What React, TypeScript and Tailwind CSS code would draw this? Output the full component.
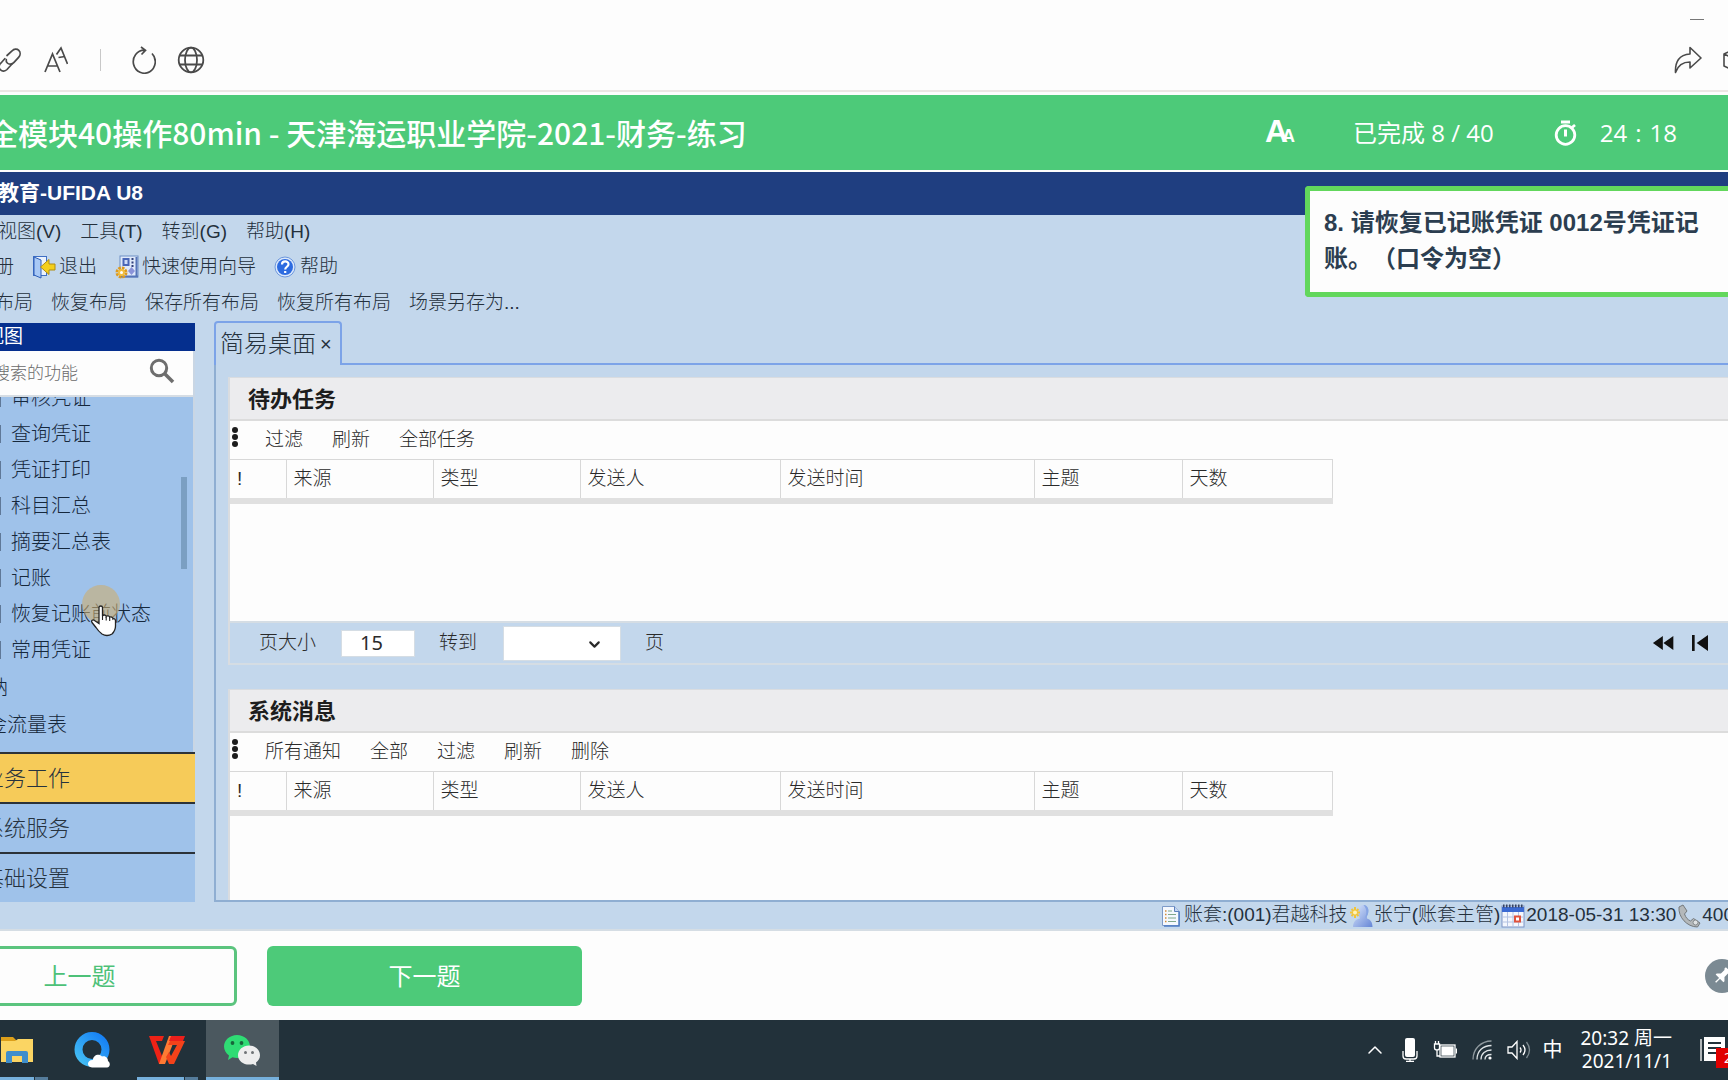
import { ReactNode } from 'react';
import { MdFastRewind, MdSkipPrevious } from 'react-icons/md';
import { ChevronDown, ChevronUp } from 'lucide-react';

const treeItems = ['审核凭证', '查询凭证', '凭证打印', '科目汇总', '摘要汇总表', '记账', '恢复记账前状态', '常用凭证'];

const menuItems = ['视图(V)', '工具(T)', '转到(G)', '帮助(H)'];

const layoutItems = ['布局', '恢复布局', '保存所有布局', '恢复所有布局', '场景另存为...'];

const navItems = [
  { label: '业务工作', active: true },
  { label: '系统服务', active: false },
  { label: '基础设置', active: false }
];

const columns = [
  { label: '!', width: 'w-[56px]' },
  { label: '来源', width: 'w-[147px]' },
  { label: '类型', width: 'w-[147px]' },
  { label: '发送人', width: 'w-[200px]' },
  { label: '发送时间', width: 'w-[254px]' },
  { label: '主题', width: 'w-[148px]' },
  { label: '天数', width: 'w-[150px]' }
];

function LinkIcon() {
  return (
    <svg className="w-7 h-7" viewBox="0 0 28 28" fill="none" stroke="#4a4a4a" strokeWidth="1.7" strokeLinecap="round">
      <path d="M11 9.500l5-4.500c2-2.200 5-2.400 6.800-.6s1.800 4.800-.2 7l-4.600 5c-2 2.200-5 2.400-6.700.6-1-1-1.300-2.200-1-3.500" />
      <path d="M16 18l-5 5.500c-2 2-4.800 2.200-6.500.4s-1.700-4.700.3-6.700l4-4.500" />
    </svg>
  );
}

function TextSizeIcon() {
  return (
    <svg className="w-6 h-7" viewBox="0 0 24 28" fill="none" stroke="#4a4a4a" strokeWidth="1.7">
      <path d="M1 26L8.500 8l7.500 18M3.500 20h10.500" />
      <path d="M12.500 8.500L17 2l6.500 16M14.500 11.500l6.500-1" />
    </svg>
  );
}

function RefreshIcon() {
  return (
    <svg className="w-6 h-7" viewBox="0 0 24 28" fill="none" stroke="#4a4a4a" strokeWidth="1.700">
      <path d="M20 7.500A11 11.500 0 1 1 12.500 4.200M9 1l4.500 3.400L9.500 8.500" />
    </svg>
  );
}

function GlobeIcon() {
  return (
    <svg className="w-7 h-7" viewBox="0 0 28 28" fill="none" stroke="#4a4a4a" strokeWidth="1.800">
      <circle cx="14" cy="14" r="12.300" />
      <ellipse cx="14" cy="14" rx="6" ry="12.300" />
      <path d="M3 9.500h22M3 18.500h22" />
    </svg>
  );
}

function ShareIcon() {
  return (
    <svg className="w-7 h-7" viewBox="0 0 28 28" fill="none" stroke="#4a4a4a" strokeWidth="1.600" strokeLinejoin="round">
      <path d="M16 1.500L27 12 16 22v-6C9 16 4 19 1.500 26.500 1 16 5 8.500 16 8z" />
    </svg>
  );
}

function CubeIcon() {
  return (
    <svg className="w-[22px] h-[22px] shrink-0" viewBox="0 0 22 22" fill="none" stroke="#4a4a4a" strokeWidth="1.600" strokeLinejoin="round">
      <path d="M11 1l9 4v12l-9 4-9-4V5zM2 5l9 4 9-4M11 9v12" />
    </svg>
  );
}

function TimerIcon() {
  return (
    <svg className="w-7 h-7 mr-5" viewBox="0 0 28 28" fill="none" stroke="#fff">
      <circle cx="13.500" cy="16" r="9.300" strokeWidth="2.800" />
      <path d="M9 3h9" strokeWidth="3" />
      <path d="M13.500 10.500v7" strokeWidth="3" />
      <path d="M20 8.500l3-2.500" strokeWidth="2.800" />
    </svg>
  );
}

function SearchIcon() {
  return (
    <svg className="w-[26px] h-[26px]" viewBox="0 0 26 26" fill="none" stroke="#6e6e6e">
      <circle cx="10" cy="10" r="7.700" strokeWidth="3" />
      <path d="M15.500 15.500l8.500 8.500" strokeWidth="3.600" />
    </svg>
  );
}

function ExitIcon() {
  return (
    <svg className="w-6 h-6" viewBox="0 0 24 24">
      <rect x="1.500" y="1.500" width="13" height="19" fill="#eaf2fd" stroke="#3f6fc4" />
      <path d="M2 2l7 3v18l-7-3z" fill="#a9c9f5" stroke="#2f5fb8" />
      <path d="M23 9v6h-6v4.500L8.500 12 17 4.500V9z" fill="#f4cf1c" stroke="#b08d13" />
    </svg>
  );
}

function WizardIcon() {
  return (
    <svg className="w-6 h-6" viewBox="0 0 24 24">
      <rect x="5" y="1" width="18" height="21" fill="#dfe9fa" stroke="#6f8fc4" />
      <path d="M21.500 2v20M6 21.500h17" stroke="#5675b8" strokeWidth="2" />
      <rect x="7.500" y="3" width="7" height="8" fill="#4a66b8" />
      <rect x="9.500" y="5" width="3" height="4" fill="#cfdcf8" />
      <path d="M17.500 3v9" stroke="#2f3f7a" strokeWidth="2" strokeDasharray="2 1.500" />
      <path d="M16.500 12l3.500 4-3.500 4-3.500-4z" fill="#8b93d8" />
      <circle cx="6.500" cy="17.500" r="4.500" fill="none" stroke="#dd9a1e" strokeWidth="3" strokeDasharray="2.500 1" />
      <circle cx="6.500" cy="17.500" r="3.500" fill="#f3bf3e" />
      <circle cx="6.500" cy="17.500" r="1.500" fill="#fff" />
    </svg>
  );
}

function HelpIcon() {
  return (
    <svg className="w-[22px] h-[22px]" viewBox="0 0 22 22">
      <circle cx="11" cy="11" r="10" fill="#dbe8fb" stroke="#6d97dd" />
      <circle cx="11" cy="11" r="8" fill="#2d6be0" />
      <path d="M8 8.500c0-4 6.500-4 6.500-.3 0 2.500-3.300 2.600-3.300 5.300M11.200 15v2" fill="none" stroke="#fff" strokeWidth="2.200" />
    </svg>
  );
}

function DocIcon() {
  return (
    <svg className="w-[22px] h-[22px] shrink-0" viewBox="0 0 22 22">
      <path d="M1.500 1.500h12l5 5v14h-17z" fill="#f4f8fe" stroke="#7d9ac8" />
      <path d="M18 7v14H3" fill="none" stroke="#4f7cc4" strokeWidth="1.500" />
      <path d="M13.500 1.500v5h5" fill="#c4d6f2" stroke="#5c80bc" />
      <path d="M4 6h1.500M4 9.500h1.500M4 13h1.500M4 16.500h1.500" stroke="#d28b3a" strokeWidth="1.500" />
      <path d="M7 6h4M7 9.500h8M7 13h8M7 16.500h8" stroke="#7fa78c" strokeWidth="1.200" />
    </svg>
  );
}

function UserIcon() {
  return (
    <svg className="w-6 h-6 shrink-0" viewBox="0 0 24 24">
      <defs>
        <linearGradient id="person" x1="0" y1="0" x2="1" y2="1">
          <stop offset="0" stopColor="#dce8fc" />
          <stop offset="1" stopColor="#6585d6" />
        </linearGradient>
      </defs>
      <path d="M4 23c0-5 3-8 7-8.500L10 12C8 8 9 1 14.500 1S20.500 8 18 12v2.500c3.500 1 5.500 4 5.500 8.500z" fill="url(#person)" />
      <path d="M14.500 1C20 1 20.500 8 18 12l-2 2c2-5 2-9-1.500-13z" fill="#86a5e4" />
      <path d="M6 3v11M1 8.500h10M2.500 5l7 7M9.500 5l-7 7" stroke="#f2c53a" strokeWidth="2" />
      <circle cx="6" cy="8.500" r="2" fill="#fff3b8" />
    </svg>
  );
}

function CalendarIcon() {
  return (
    <svg className="w-6 h-6 shrink-0" viewBox="0 0 24 24">
      <rect x="1" y="2" width="22" height="21" fill="#f4f7fd" stroke="#7d94c4" />
      <path d="M1 3h22v5H1z" fill="#3b6ad2" />
      <path d="M2 2h21" stroke="#36435f" strokeWidth="3" strokeDasharray="1.500 1.500" />
      <path d="M6.500 8v15M12 8v15M17.500 8v15M1 13h22M1 18h22" stroke="#b4c3e2" />
      <rect x="14" y="12.500" width="5" height="5" fill="#fff" stroke="#e0523c" strokeWidth="2" />
    </svg>
  );
}

function PhoneIcon() {
  return (
    <svg className="w-6 h-6 shrink-0" viewBox="0 0 24 24">
      <path d="M2 3l4-2 4 6-2.500 3c1.500 4 3 5.500 6 7l3-2.500L23 19l-2.500 4C10 23 1 13 2 3z" fill="#b4b8ba" stroke="#74797c" />
      <circle cx="18.500" cy="18.500" r="2.500" fill="#dfe2e3" stroke="#84898c" />
    </svg>
  );
}

function HandCursor() {
  return (
    <svg className="w-7 h-8" viewBox="0 0 28 32">
      <path
        d="M9 2.500c0-2 3.500-2 3.500 0V11c.5-1.500 3.500-1.300 3.700.5.800-1.200 3.300-.8 3.500.9 1-1 3.300-.4 3.300 1.600 1.200-.8 2.500.2 2.500 2v5c0 4-1.500 6-3.500 8q-5 3-10 0c-2-1.500-4-3.500-6-6.500l-4-5c-1.300-2 1-3.300 2.500-2L9 18.500z"
        fill="#fff"
        stroke="#222"
        strokeWidth="1.300"
      />
      <path d="M12.500 11v4M16.200 12v3.500M19.700 13v3" stroke="#222" strokeWidth="1.100" />
    </svg>
  );
}

function PinIcon() {
  return (
    <svg className="w-5 h-5" viewBox="0 0 20 20">
      <g transform="rotate(45 10 10)" fill="#fff">
        <path d="M6.500 1h7v2l-1 1v5l3 3v1.500h-11V12l3-3V4l-1-1z" />
        <path d="M9.300 13h1.400v6H9.300z" />
      </g>
    </svg>
  );
}

function FolderLogo() {
  return (
    <svg className="w-8 h-7" viewBox="0 0 32 28">
      <path d="M0 1h12l3 3v4H0z" fill="#dc9f1a" />
      <path d="M0 5h14l3-2h15v23H0z" fill="#fbd563" />
      <path d="M5 27V17q0-2 2-2h18q2 0 2 2v10h-6v-7H11v7z" fill="#3f8ecb" />
    </svg>
  );
}

function BrowserLogo() {
  return (
    <svg className="w-9 h-9" viewBox="0 0 36 36">
      <defs>
        <linearGradient id="ring" x1="0" y1="1" x2="1" y2="0">
          <stop offset="0" stopColor="#45c0f4" />
          <stop offset="1" stopColor="#147df5" />
        </linearGradient>
      </defs>
      <ellipse cx="18" cy="17.500" rx="13.500" ry="13.500" fill="none" stroke="url(#ring)" strokeWidth="8" />
      <path d="M18 35.500c-6-.5-5-8 1-7.500 0-5 6-7 9-3.500 4-1 6 2 6 4.500 3 2 2 6.500-1 6.500z" fill="#fff" />
    </svg>
  );
}

function WpsLogo() {
  return (
    <svg className="w-9 h-7" viewBox="0 0 36 28">
      <path d="M0 0h15l-2 5H7l6 15 3 0-3 8h-3z" fill="#ee2216" />
      <path d="M20 0h7L16 28h-6z" fill="#ff7a33" />
      <path d="M21 5h15l-11 23h-5l-3-7 3-5 2 4 6-11h-9z" fill="#f4421a" />
      <path d="M22 0h14l-2 5H20z" fill="#ec1f1b" />
    </svg>
  );
}

function WechatLogo() {
  return (
    <svg className="w-9 h-8" viewBox="0 0 36 32">
      <path d="M13 1c7 0 13 5 13 11.500S20 24 13 24c-1.500 0-3-.2-4.500-.7L4 26l1-4.500C2 19.500 0 16 0 12.500 0 6 6 1 13 1z" fill="#2fdc74" />
      <circle cx="8.500" cy="9" r="1.900" fill="#17653a" />
      <circle cx="17.500" cy="9" r="1.900" fill="#17653a" />
      <path d="M25 11.500c6 0 11 4.300 11 9.700 0 3-1.500 5.500-4 7.300l.5 3.500-3.500-2c-1.300.4-2.600.6-4 .6-6 0-11-4-11-9.400s5-9.700 11-9.700z" fill="#ededed" />
      <circle cx="21.500" cy="18.500" r="1.500" fill="#6f7376" />
      <circle cx="28.500" cy="18.500" r="1.500" fill="#6f7376" />
    </svg>
  );
}

function MicIcon() {
  return (
    <svg className="w-4 h-6" viewBox="0 0 16 24">
      <rect x="3" y="0" width="10" height="19" rx="2" fill="#fff" />
      <path d="M1 13v5q0 3 3 3h8q3 0 3-3v-5M8 21v2.500M4 23.300h8" fill="none" stroke="#fff" strokeWidth="1.300" />
    </svg>
  );
}

function BatteryIcon() {
  return (
    <svg className="w-6 h-5" viewBox="0 0 24 20" fill="none" stroke="#fff" strokeWidth="1.300">
      <path d="M1.500 4h5v4q0 2-2.500 2T1.500 8zM2.500 4V1M5.500 4V1M4 10v6h3" />
      <rect x="7" y="5" width="15" height="12" />
      <rect x="9" y="7" width="11" height="8" fill="#fff" />
      <path d="M23.500 8.500v5" />
    </svg>
  );
}

function WifiIcon() {
  return (
    <svg className="w-5 h-5" viewBox="0 0 20 20" fill="none" stroke="#dfe4e6" strokeWidth="1.300">
      <path d="M1 19.500C1 9 9 1 19.500 1" stroke="#8f999e" />
      <path d="M5 19.500C5 11 11 5.500 19.500 5.500M9 19.500c0-6 4.500-9.500 10.500-9.500M13 19.500c0-3 2.500-5 6.500-5" />
      <circle cx="18" cy="18" r="1.600" fill="#fff" stroke="none" />
    </svg>
  );
}

function VolumeIcon() {
  return (
    <svg className="w-6 h-5" viewBox="0 0 24 20" fill="none" stroke="#fff" strokeWidth="1.300">
      <path d="M1 7h4l5-5.500v17L5 13H1zM13 7.500q2 2.500 0 5M16 5q4 5 0 10" />
      <path d="M19.500 2q6 8 0 16" stroke="#7d898f" />
    </svg>
  );
}

function NoteIcon() {
  return (
    <svg className="w-7 h-7" viewBox="0 0 28 28">
      <path d="M1 3v22" stroke="#fff" strokeWidth="1.300" />
      <path d="M4 1h21v19l-5 5H4z" fill="#fff" />
      <path d="M8 7h13M8 12h13M8 17h8" stroke="#22313a" strokeWidth="2" />
    </svg>
  );
}

function TitleBar() {
  return (
    <header className="h-[92px] shrink-0 flex flex-col border-b-2 border-[#ece6e4]">
      <div className="h-[38px] flex justify-end items-center pr-6">
        <button aria-label="最小化" className="w-[14px] h-3 flex items-center">
          <span className="w-full h-px bg-[#777777]" />
        </button>
      </div>
      <div className="h-11 flex items-center">
        <button aria-label="复制链接" className="-ml-1"><LinkIcon /></button>
        <button aria-label="字体大小" className="ml-5"><TextSizeIcon /></button>
        <span className="w-px h-[22px] ml-8 bg-[#c8c8c8]" />
        <button aria-label="刷新" className="ml-[31px]"><RefreshIcon /></button>
        <button aria-label="浏览器" className="ml-[21px]"><GlobeIcon /></button>
        <button aria-label="分享" className="ml-auto"><ShareIcon /></button>
        <button aria-label="收藏" className="ml-5 -mr-4"><CubeIcon /></button>
      </div>
    </header>
  );
}

function ExamHeader() {
  return (
    <div className="h-[75px] shrink-0 mt-[3px] mb-0.5 bg-[#4dca79] text-white flex items-center whitespace-nowrap font-['Open_Sans','Noto_Sans_CJK_SC',sans-serif]">
      <h1 className="-ml-3 text-[30px] font-medium font-['Noto_Sans_CJK_SC',sans-serif]">
        全模块40操作80min - 天津海运职业学院-2021-财务-练习
      </h1>
      <button aria-label="字号" className="ml-auto mr-[58px] flex items-baseline font-['Liberation_Sans',sans-serif] font-bold leading-none">
        <span className="text-[32px]">A</span>
        <span className="-ml-1.5 text-lg">A</span>
      </button>
      <span className="text-2xl mr-[58px]">已完成 8 / 40</span>
      <TimerIcon />
      <span className="text-2xl mr-[51px] flex gap-2">
        <span>24</span>
        <span>:</span>
        <span>18</span>
      </span>
    </div>
  );
}

function Toolbar() {
  return (
    <div className="text-[19px] leading-6 text-[#24303c] whitespace-nowrap">
      <div className="h-[33px] flex items-center gap-[19px] -ml-0.5">
        {menuItems.map((item) => (
          <button key={item}>{item}</button>
        ))}
      </div>
      <div className="h-[37px] flex items-center gap-[18px] -ml-[5px]">
        <button>册</button>
        <button className="flex items-center gap-[3px]"><ExitIcon />退出</button>
        <button className="flex items-center gap-[3px]"><WizardIcon />快速使用向导</button>
        <button className="flex items-center gap-1"><HelpIcon />帮助</button>
      </div>
      <div className="h-9 flex items-center gap-[18px] -ml-[5px]">
        {layoutItems.map((item) => (
          <button key={item}>{item}</button>
        ))}
      </div>
    </div>
  );
}

function Sidebar() {
  return (
    <aside className="w-[195px] shrink-0 mt-0.5 flex flex-col overflow-hidden whitespace-nowrap">
      <div className="h-7 shrink-0 flex items-center bg-[#052f8e] text-white text-[19px] font-normal">
        <span className="-ml-[15px]">视图</span>
      </div>
      <div className="flex-1 min-h-0 flex flex-col bg-[#9fc2ea] border-r-2 border-[#c9d6e4]">
        <div className="h-[46px] shrink-0 flex items-center bg-[#fdfdfd] border-b-2 border-[#d6dde4]">
          <input
            aria-label="搜索功能"
            placeholder="搜索的功能"
            className="-ml-[7px] w-[156px] min-w-0 pt-0.5 text-[17px] placeholder:text-[#6a6a6a] outline-none"
          />
          <button aria-label="搜索" className="pb-1"><SearchIcon /></button>
        </div>
        <div className="relative flex-1 min-h-0 overflow-hidden text-xl text-[#16283c]">
          <ul className="-mt-[17px]">
            {treeItems.map((item) => (
              <li key={item} className="h-9 flex items-center gap-2.5">
                <span className="w-px h-[18px] bg-[#5f7898]" />
                <a href="#" className="text-inherit">{item}</a>
              </li>
            ))}
            <li className="h-[39px] flex items-center -ml-8"><a href="#">出纳</a></li>
            <li className="h-9 flex items-center -ml-[33px]"><a href="#">现金流量表</a></li>
          </ul>
          <span className="absolute right-[6px] top-20 w-1.5 h-[92px] bg-[#7b9fc2]" />
          <span className="absolute left-[82px] top-[188px] w-[38px] h-[38px] rounded-full bg-[#cdae6f]/60" />
          <span className="absolute left-[90px] top-[208px]"><HandCursor /></span>
        </div>
        <nav className="shrink-0 -mr-0.5">
          {navItems.map((item) => (
            <button
              key={item.label}
              className={`w-full h-[50px] flex items-center border-t-2 border-[#2c3238] text-[22px] text-[#26323e] ${item.active ? 'bg-[#f6cb59]' : 'bg-[#9fc2ea]'}`}
            >
              <span className="-ml-[18px]">{item.label}</span>
            </button>
          ))}
        </nav>
      </div>
    </aside>
  );
}

function Panel({ title, actions, grow, children }: { title: string; actions: string[]; grow?: boolean; children?: ReactNode }) {
  return (
    <section className={`flex flex-col border-l-2 border-t border-[#d9dce0] ${grow ? 'flex-1 min-h-0' : ''}`}>
      <h2 className="h-[43px] shrink-0 flex items-center pl-[18px] pt-0.5 bg-[#ececee] border-b-2 border-[#dcdcdc] text-[22px] font-bold text-[#1d1d1d]">
        {title}
      </h2>
      <div className={`bg-[#fdfdfd] ${grow ? 'flex-1' : 'h-[200px]'}`}>
        <div className="h-[38px] flex items-center">
          <svg className="w-2 h-[22px] ml-px mb-1.5" viewBox="0 0 8 22" fill="#1c1c1c">
            <circle cx="4" cy="4" r="3" />
            <circle cx="4" cy="11" r="3" />
            <circle cx="4" cy="18" r="3" />
          </svg>
          <div className="ml-[26px] flex gap-[29px]">
            {actions.map((action) => (
              <button key={action}>{action}</button>
            ))}
          </div>
        </div>
        <table className="table-fixed w-[1102px] border-collapse">
          <thead>
            <tr className="h-[41px] border-t border-t-[#d8d8d8] border-b-[6px] border-b-[#e0e0e0]">
              {columns.map((column) => (
                <th key={column.label} scope="col" className={`${column.width} pl-[7px] text-left font-light border-r border-r-[#d8d8d8]`}>
                  {column.label}
                </th>
              ))}
            </tr>
          </thead>
        </table>
      </div>
      {children}
    </section>
  );
}

function Pager() {
  return (
    <div className="h-11 shrink-0 flex items-center border-y-2 border-[#d5dde4] pl-[29px] pr-3">
      <label htmlFor="page-size">页大小</label>
      <input
        id="page-size"
        defaultValue="15"
        className="ml-[25px] w-[74px] h-[27px] pl-[18px] bg-white border border-[#d5dde4] text-xl outline-none font-normal font-['Noto_Sans',sans-serif]"
      />
      <label htmlFor="page-go" className="ml-6">转到</label>
      <span className="relative ml-[26px]">
        <select id="page-go" className="block w-[118px] h-[35px] bg-white border border-[#d5dde4] appearance-none outline-none">
          <option></option>
        </select>
        <ChevronDown className="absolute right-[18px] top-2.5 w-[17px] h-[17px] pointer-events-none" strokeWidth={3} />
      </span>
      <span className="ml-6">页</span>
      <button aria-label="上一页" className="ml-auto text-[#111]"><MdFastRewind className="w-7 h-7" /></button>
      <button aria-label="首页" className="ml-1.5 text-[#111]"><MdSkipPrevious className="w-8 h-8" /></button>
    </div>
  );
}

function Desktop() {
  return (
    <main className="flex-1 min-w-0 ml-[19px] flex flex-col text-[19px] text-[#2a2a2a] whitespace-nowrap">
      <div className="h-11 shrink-0 flex">
        <div className="w-[128px] flex items-center gap-1 pl-1 border-2 border-b-0 border-[#7ca3e8] rounded-t-sm text-2xl text-[#26323e]">
          简易桌面
          <button aria-label="关闭" className="text-xl">×</button>
        </div>
        <div className="flex-1 border-b-2 border-[#7ca3e8]" />
      </div>
      <div className="flex-1 min-h-0 flex flex-col gap-6 pl-3 pt-3 border-l-2 border-b-2 border-[#8faed2]">
        <Panel title="待办任务" actions={['过滤', '刷新', '全部任务']}>
          <Pager />
        </Panel>
        <Panel title="系统消息" actions={['所有通知', '全部', '过滤', '刷新', '删除']} grow />
      </div>
    </main>
  );
}

function StatusBar() {
  return (
    <div className="h-[29px] shrink-0 flex items-center justify-end border-b-2 border-[#d5dde4] text-[19px] text-[#24303c] whitespace-nowrap overflow-hidden">
      <div className="flex items-center gap-px -mr-[6px]">
        <DocIcon />
        <span>账套:(001)君越科技</span>
        <UserIcon />
        <span>张宁(账套主管)</span>
        <CalendarIcon />
        <span>2018-05-31 13:30</span>
        <PhoneIcon />
        <span>400</span>
      </div>
    </div>
  );
}

function UfidaWindow() {
  return (
    <div className="relative flex-1 min-h-0 flex flex-col bg-[#c3d7ec] font-light font-['Liberation_Sans','Noto_Sans_CJK_SC',sans-serif]">
      <div className="h-[43px] shrink-0 flex items-center pb-0.5 bg-[#1f3e80] text-white text-[21px] font-bold">
        <span className="-ml-0.5">教育-UFIDA U8</span>
      </div>
      <Toolbar />
      <div className="flex-1 min-h-0 flex">
        <Sidebar />
        <Desktop />
      </div>
      <StatusBar />
      <div className="absolute right-0 top-3.5 w-[423px] h-[111px] border-[5px] border-r-0 border-[#62d75c] rounded-l bg-[#fdfdfd] pl-3.5 pr-6 pt-3.5 text-2xl leading-9 font-bold text-[#2c3e50] [text-spacing-trim:space-all]">
        8. 请恢复已记账凭证 0012号凭证记账。（口令为空）
      </div>
    </div>
  );
}

function ExamFooter() {
  return (
    <footer className="h-[89px] shrink-0 flex items-center text-2xl">
      <button className="-ml-[78px] w-[315px] h-[60px] rounded-md border-[3px] border-[#5bc47e] text-[#4dc178]">上一题</button>
      <button className="ml-[30px] w-[315px] h-[60px] rounded-md bg-[#4dca79] text-white">下一题</button>
      <button aria-label="固定" className="ml-auto -mr-[11px] w-[34px] h-[34px] rounded-full bg-[#7b8a93] flex items-center justify-center">
        <PinIcon />
      </button>
    </footer>
  );
}

function Taskbar() {
  return (
    <div className="h-[60px] shrink-0 flex items-center bg-[#22313a] text-white overflow-hidden">
      <button aria-label="文件资源管理器" className="w-12 h-full flex flex-col justify-between">
        <span className="pt-4 pl-px"><FolderLogo /></span>
        <span className="w-full h-[3px] flex gap-px">
          <span className="w-[34px] bg-[#76b0dc]" />
          <span className="flex-1 bg-[#557c9b]" />
        </span>
      </button>
      <button aria-label="QQ浏览器" className="ml-[26px] pb-5 pt-3 h-full"><BrowserLogo /></button>
      <button aria-label="WPS" className="ml-[27px] w-[61px] h-full flex flex-col justify-between">
        <span className="pt-4 pl-3"><WpsLogo /></span>
        <span className="w-full h-[3px] flex gap-px">
          <span className="w-[47px] bg-[#76b0dc]" />
          <span className="flex-1 bg-[#557c9b]" />
        </span>
      </button>
      <button aria-label="微信" className="ml-2 w-[73px] h-full pt-3.5 pl-[18px] bg-[#4b585f] border-b-[3px] border-[#76b0dc] flex items-start">
        <WechatLogo />
      </button>
      <div className="ml-auto flex items-center gap-[15px]">
        <ChevronUp className="w-6 h-6" strokeWidth={1.5} />
        <MicIcon />
        <BatteryIcon />
        <WifiIcon />
        <VolumeIcon />
        <span className="-ml-1 text-xl">中</span>
      </div>
      <div className="ml-[18px] text-[19px] leading-[23px] text-right font-['Noto_Sans','Noto_Sans_CJK_SC',sans-serif] whitespace-nowrap">
        <div>20:32 周一</div>
        <div>2021/11/1</div>
      </div>
      <button aria-label="通知" className="relative ml-7">
        <NoteIcon />
        <span className="absolute left-4 top-3 w-5 h-5 bg-[#e00000] text-sm leading-5 pl-2 text-left">2</span>
      </button>
    </div>
  );
}

export default function App() {
  return (
    <div className="h-screen flex flex-col overflow-hidden bg-[#fdfdfd] font-['Noto_Sans','Noto_Sans_CJK_SC',sans-serif]">
      <TitleBar />
      <ExamHeader />
      <UfidaWindow />
      <ExamFooter />
      <Taskbar />
    </div>
  );
}
